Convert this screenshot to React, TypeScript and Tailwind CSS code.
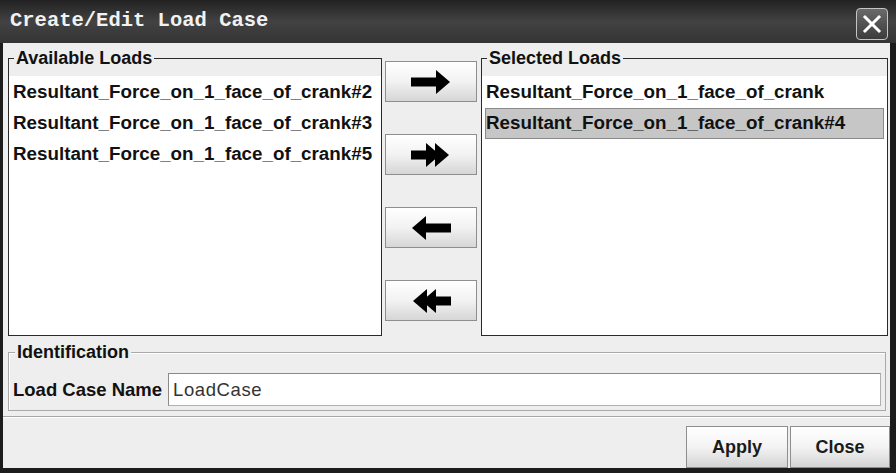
import React from "react";

const available = [
  "Resultant_Force_on_1_face_of_crank#2",
  "Resultant_Force_on_1_face_of_crank#3",
  "Resultant_Force_on_1_face_of_crank#5",
];

const selected = ["Resultant_Force_on_1_face_of_crank", "Resultant_Force_on_1_face_of_crank#4"];

type ArrowKind = "right" | "allRight" | "left" | "allLeft";

function Arrow({ kind }: { kind: ArrowKind }) {
  // drawn pointing right, flipped for the left variants
  const flip = kind === "left" || kind === "allLeft";
  const double = kind === "allRight" || kind === "allLeft";
  return (
    <svg width="42" height="26" viewBox="0 0 42 26" className={flip ? "-scale-x-100" : ""}>
      {double ? (
        <>
          <path d="M1 8.5h16v9H1z" fill="#000" />
          <path d="M16 1l14 12-14 12z" fill="#000" />
          <path d="M25 1l14 12-14 12z" fill="#000" />
        </>
      ) : (
        <>
          <path d="M1 8.5h27v9H1z" fill="#000" />
          <path d="M26 1l14 12-14 12z" fill="#000" />
        </>
      )}
    </svg>
  );
}

function MoveButton({ kind }: { kind: ArrowKind }) {
  return (
    <button className="flex h-[41px] w-[92px] items-center justify-center border border-[#8e8e8e] bg-gradient-to-b from-[#ffffff] via-[#f2f2f2] to-[#d6d6d6]">
      <Arrow kind={kind} />
    </button>
  );
}

function TitledList({
  title,
  items,
  selectedIndex,
  width,
}: {
  title: string;
  items: string[];
  selectedIndex?: number;
  width: string;
}) {
  return (
    <div className={`relative mt-[15px] h-[278px] ${width} border border-[#2a2a2a] pt-[17px]`}>
      <span className="absolute -top-[11px] left-[5px] bg-[#eeeeee] px-[2px] text-[18px] font-bold leading-[20px] text-[#111]">
        {title}
      </span>
      <div className="h-full bg-white pt-[1px]">
        {items.map((it, i) => (
          <div
            key={it}
            className={`mx-[3px] flex h-[31px] items-center text-[18.8px] font-bold text-[#111] ${
              i === selectedIndex ? "border border-[#8a8a8a] bg-[#c6c6c6]" : "border border-transparent"
            }`}
          >
            {it}
          </div>
        ))}
      </div>
    </div>
  );
}

function DialogButton({ label, width }: { label: string; width: string }) {
  return (
    <button
      className={`h-[42px] ${width} border border-[#8e8e8e] bg-gradient-to-b from-[#ffffff] via-[#f3f3f3] to-[#d4d4d4] text-[18px] font-bold text-[#1a1a1a]`}
    >
      {label}
    </button>
  );
}

export default function App() {
  return (
    <div
      className="flex h-[473px] w-[896px] flex-col overflow-hidden bg-[#1c1c1c]"
      style={{ fontFamily: '"Liberation Sans", Arial, sans-serif' }}
    >
      {/* Title bar */}
      <div className="flex h-[43px] shrink-0 items-center justify-between bg-gradient-to-b from-[#222222] via-[#424242] to-[#343434] pl-[10px] pr-[8px]">
        <span
          className="text-[20.5px] font-bold text-[#f2f2f2]"
          style={{ fontFamily: '"Liberation Mono", "Courier New", monospace' }}
        >
          Create/Edit Load Case
        </span>
        <button className="mt-[5px] flex h-[32px] w-[32px] items-center justify-center rounded-[4px] border border-[#c4c4c4] bg-gradient-to-b from-[#6a6a6a] to-[#3c3c3c]">
          <svg width="20" height="20" viewBox="0 0 20 20">
            <path d="M3 3l14 14M17 3L3 17" stroke="#fff" strokeWidth="3" strokeLinecap="square" />
          </svg>
        </button>
      </div>

      {/* Body */}
      <div className="ml-[3px] mr-[6px] mb-[5px] flex flex-1 flex-col bg-[#eeeeee]">
        <div className="flex pl-[5px]">
          <TitledList title="Available Loads" items={available} width="w-[374px]" />
          <div className="flex w-[99px] flex-col gap-[32px] pl-[3px] pt-[18px]">
            <MoveButton kind="right" />
            <MoveButton kind="allRight" />
            <MoveButton kind="left" />
            <MoveButton kind="allLeft" />
          </div>
          <TitledList title="Selected Loads" items={selected} selectedIndex={1} width="w-[407px]" />
        </div>

        {/* Identification */}
        <div className="relative ml-[5px] mt-[16px] h-[59px] w-[878px] border border-[#a9a9a9] shadow-[inset_1px_1px_0_#ffffff]">
          <span className="absolute -top-[11px] left-[6px] bg-[#eeeeee] px-[2px] text-[18px] font-bold leading-[20px] text-[#111]">
            Identification
          </span>
          <div className="flex items-center pl-[4px] pr-[4px] pt-[20px]">
            <span className="w-[155px] text-[18.5px] font-bold text-[#111]">Load Case Name</span>
            <div className="flex h-[33px] flex-1 items-center border border-[#8a8a8a] border-b-[#b0b0b0] border-r-[#b0b0b0] bg-white pl-[4px] text-[18.5px] tracking-[0.6px] text-[#333]">
              LoadCase
            </div>
          </div>
        </div>

        <div className="mt-[5px] h-[1px] bg-[#a6a6a6]" />
        <div className="h-[1px] bg-white" />

        <div className="mt-auto flex justify-end gap-[2px]">
          <DialogButton label="Apply" width="w-[102px]" />
          <DialogButton label="Close" width="w-[100px]" />
        </div>
      </div>
    </div>
  );
}
